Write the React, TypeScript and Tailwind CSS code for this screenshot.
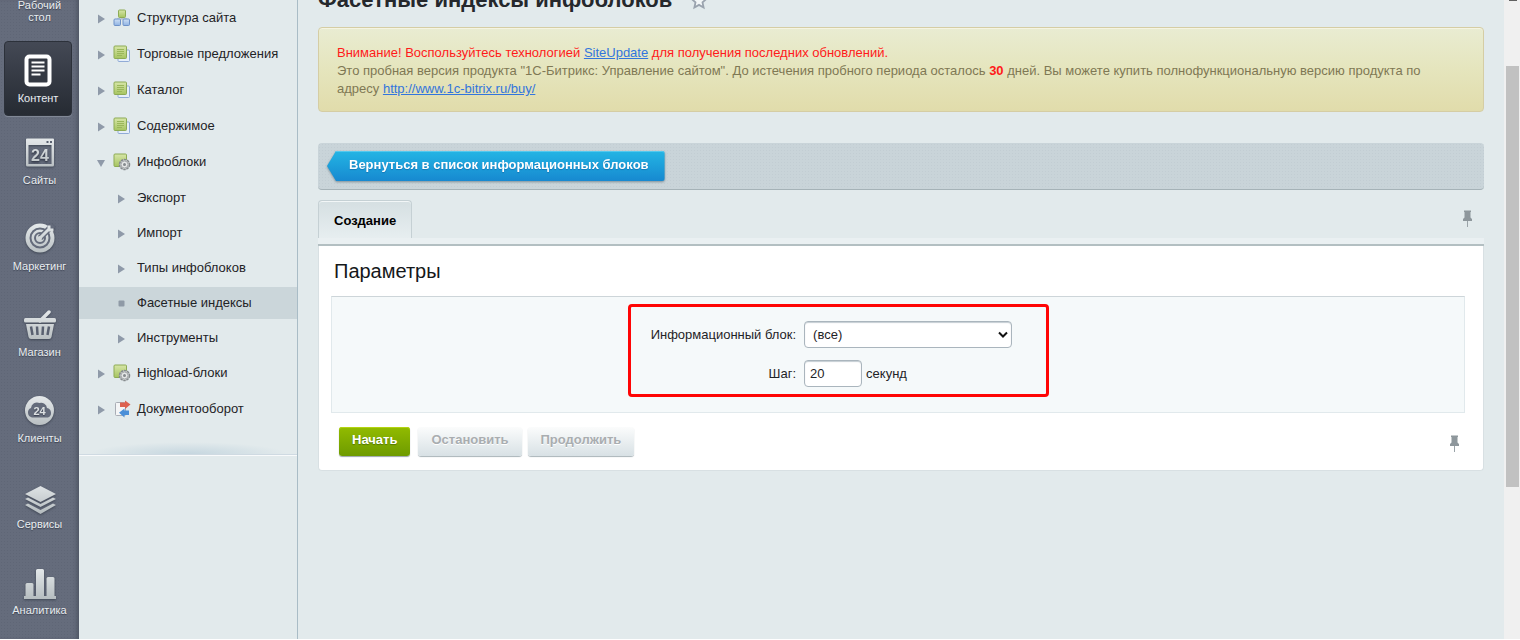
import { useState } from "react";
import type { ReactNode } from "react";

type RailItem = { label: string; icon: ReactNode };
type MenuItem = {
  label: string;
  icon?: "structure" | "pages" | "block" | "workflow";
  sub?: boolean;
  open?: boolean;
};

const MENU: MenuItem[] = [
  { label: "Структура сайта", icon: "structure" },
  { label: "Торговые предложения", icon: "pages" },
  { label: "Каталог", icon: "pages" },
  { label: "Содержимое", icon: "pages" },
  { label: "Инфоблоки", icon: "block", open: true },
  { label: "Экспорт", sub: true },
  { label: "Импорт", sub: true },
  { label: "Типы инфоблоков", sub: true },
  { label: "Фасетные индексы", sub: true },
  { label: "Инструменты", sub: true },
  { label: "Highload-блоки", icon: "block" },
  { label: "Документооборот", icon: "workflow" },
];

const RAIL: RailItem[] = [
  { label: "Сайты", icon: <SitesIcon /> },
  { label: "Маркетинг", icon: <TargetIcon /> },
  { label: "Магазин", icon: <BasketIcon /> },
  { label: "Клиенты", icon: <CloudIcon /> },
  { label: "Сервисы", icon: <LayersIcon /> },
  { label: "Аналитика", icon: <BarsIcon /> },
];

export default function App() {
  return (
    <div className="flex h-screen overflow-hidden border-b border-white bg-[#e2eaec] font-['Liberation_Sans',Arial,sans-serif] text-[13px] text-[#1f2326]">
      <Gradients />
      <Rail />
      <Sidebar />
      <MainArea />
      {/* Scrollbar */}
      <div className="w-4 shrink-0 bg-[#f0f0f0] pl-0.5 pr-px">
        <div className="mx-auto h-px w-2 bg-[#606060]" />
        <div className="mt-[65px] h-[421px] bg-[#c1c1c1]" />
      </div>
    </div>
  );
}

function Rail() {
  return (
    <nav className="flex w-[79px] shrink-0 flex-col bg-[#656c7c] bg-[radial-gradient(#5f6676_1px,transparent_1px)] bg-[size:3px_3px] text-[11px] text-[#e9edf0] shadow-[inset_-4px_0_4px_-2px_#4e5563] [text-shadow:0_1px_1px_#3b4150]">
      <a href="#desktop" className="-mt-px h-[42px] shrink-0 px-3 text-center leading-3">
        Рабочий стол
      </a>
      <a
        href="#content"
        className="ml-1 mr-[7px] flex h-[75px] shrink-0 flex-col items-center rounded-sm border border-[#2c313a] bg-linear-to-b from-[#444955] to-[#262b33] pt-2.5 shadow-[0_1px_0_#818896]"
      >
        <ContentIcon />
        <span className="leading-4">Контент</span>
      </a>
      <div className="pt-[21px]">
        {RAIL.map((item) => (
          <a key={item.label} href="#section" className="flex h-[86px] flex-col items-center">
            {item.icon}
            <span className="mt-px leading-4">{item.label}</span>
          </a>
        ))}
      </div>
    </nav>
  );
}

function Sidebar() {
  const [active, setActive] = useState("Фасетные индексы");

  return (
    <aside className="w-[219px] shrink-0 border-r border-[#a9bcc6]">
      <div className="h-[455px] border-b border-[#cfdae2] bg-[radial-gradient(ellipse_at_bottom,#c5d6df_0%,transparent_70%)] bg-[size:200px_12px] bg-[position:center_bottom] bg-no-repeat shadow-[0_1px_0_#f8fafb]">
        <ul>
          {MENU.map((item) => (
            <li key={item.label} className={item.sub ? "flex h-[35px] items-center" : "flex h-9 items-center"}>
              <a
                href="#menu"
                onClick={() => setActive(item.label)}
                className={`flex h-8 w-full items-center ${active === item.label ? "bg-[#cbd6da]" : ""}`}
              >
                <span className={item.sub ? "w-[58px] pl-[38px]" : "w-[34px] pl-[18px]"}>
                  <Marker open={item.open} dot={active === item.label} />
                </span>
                {item.icon && (
                  <span className="w-6">
                    <MenuIcon kind={item.icon} />
                  </span>
                )}
                {item.label}
              </a>
            </li>
          ))}
        </ul>
      </div>
    </aside>
  );
}

function MainArea() {
  return (
    <main className="min-w-0 flex-1 px-5">
      <div className="-mt-3 flex h-[39px] items-start gap-[18px]">
        <h1 className="text-[22px] font-bold leading-6 text-[#25282c]">Фасетные индексы инфоблоков</h1>
        <button type="button" aria-label="В избранное" className="pt-1">
          <svg width="18" height="18" viewBox="0 0 18 18">
            <path
              d="M9 1.5l2.2 4.8 5.2.6-3.9 3.5 1.1 5.1L9 12.9l-4.6 2.6 1.1-5.1L1.600 6.900l5.200-.6z"
              fill="#f2f6f7"
              stroke="#9aa3ae"
              strokeWidth="1.8"
            />
          </svg>
        </button>
      </div>

      {/* Trial notice */}
      <div className="h-[85px] rounded border border-[#d5cda4] bg-linear-to-b from-[#e9ecd2] via-[#e5e5bd] to-[#e1dcab] px-[18px] pt-4 leading-[18px] text-[#7f7854] shadow-[inset_0_1px_0_#f5f4e3]">
        <p className="text-[#ff1a1a]">
          Внимание! Воспользуйтесь технологией{" "}
          <a href="#siteupdate" className="text-[#3275dd] underline">
            SiteUpdate
          </a>{" "}
          для получения последних обновлений.
        </p>
        <p className="pr-10">
          Это пробная версия продукта "1С-Битрикс: Управление сайтом". До истечения пробного периода осталось{" "}
          <b className="text-[#ff1a1a]">30</b> дней. Вы можете купить полнофункциональную версию продукта по адресу{" "}
          <a href="#buy" className="text-[#3275dd] underline">
            http://www.1c-bitrix.ru/buy/
          </a>
        </p>
      </div>

      {/* Toolbar */}
      <div className="mt-[31px] flex h-[47px] rounded-sm border-b border-[#a5b2b7] bg-[#c9d4d9] bg-[radial-gradient(#c2cdd3_1px,transparent_1px)] bg-[size:3px_3px] px-[9px] pt-2">
        <div className="h-[30px] drop-shadow-[0_1px_1px_#7b8d97]">
          <a
            href="#list"
            className="block h-[30px] rounded-[3px] bg-linear-to-b from-[#25b5e4] to-[#1789d0] pl-[22px] pr-4 font-bold leading-7 text-white shadow-[inset_0_1px_0_#55c9ee] [clip-path:polygon(9px_0,100%_0,100%_100%,9px_100%,0_50%)] [text-shadow:0_1px_1px_#1577b5]"
          >
            Вернуться в список информационных блоков
          </a>
        </div>
      </div>

      {/* Tabs */}
      <div className="mt-2.5 flex h-[38px] items-start justify-between">
        <button
          type="button"
          className="h-[38px] rounded-t-sm border border-b-0 border-[#c5d0d4] bg-linear-to-b from-[#d5dfe2] to-[#e7eef0] px-[15px] pt-0.5 font-bold text-black shadow-[inset_0_1px_0_#f2f6f7]"
        >
          Создание
        </button>
        <PinButton className="mr-2.5 mt-2.5" />
      </div>
      <div className="h-2 border-b-2 border-[#b3bfc2] bg-[#eaf0f2]" />

      <section className="rounded-b-sm border border-t-0 border-[#d8e0e3] bg-white px-3 pb-3.5">
        <h2 className="h-[50px] pl-[3px] text-xl leading-[50px] text-[#15181a]">Параметры</h2>
        <form onSubmit={(e) => e.preventDefault()}>
          <div className="mr-1.5 grid h-[117px] grid-cols-[41%_1fr] content-start items-center gap-x-2 gap-y-3 border border-[#e1e9ec] border-t-[#cdd5d9] bg-[#f5f9fa] pt-6">
            <label htmlFor="iblock" className="text-right">
              Информационный блок:
            </label>
            <div className="relative w-52">
              <select
                id="iblock"
                className="block h-[27px] w-full appearance-none rounded border border-[#aab5bd] bg-white px-2 shadow-[inset_0_1px_1px_#c5ced3]"
              >
                <option>(все)</option>
              </select>
              <svg className="pointer-events-none absolute right-1 top-2.5" width="10" height="8" viewBox="0 0 10 8">
                <path d="M1 1.500l4 4 4-4" fill="none" stroke="#111" strokeWidth="2" />
              </svg>
              <div className="pointer-events-none absolute -left-44 -top-[17px] h-[93px] w-[421px] rounded-sm border-[3px] border-[#ff0505]" />
            </div>
            <label htmlFor="step" className="text-right">
              Шаг:
            </label>
            <div className="flex items-center gap-1">
              <input
                id="step"
                type="text"
                defaultValue="20"
                className="h-[27px] w-[58px] rounded border border-[#aab5bd] bg-white px-[5px] shadow-[inset_0_1px_1px_#c5ced3]"
              />
              <span>секунд</span>
            </div>
          </div>

          <div className="mt-3.5 flex items-start pl-2">
            <button
              type="submit"
              className="h-[29px] rounded-[3px] bg-linear-to-b from-[#92bb00] to-[#6e9b00] px-[13px] pb-1 font-bold text-white shadow-[inset_0_1px_0_#b4d411,0_1px_1px_#9aa5a9] [text-shadow:0_1px_1px_#557700]"
            >
              Начать
            </button>
            <GreyButton className="ml-2">Остановить</GreyButton>
            <GreyButton className="ml-1.5">Продолжить</GreyButton>
            <PinButton className="ml-auto mr-2.5 mt-2" />
          </div>
        </form>
      </section>
    </main>
  );
}

function GreyButton({ children, className }: { children: ReactNode; className: string }) {
  return (
    <button
      type="button"
      disabled
      className={`h-[29px] rounded-[3px] bg-linear-to-b from-[#fbfcfc] to-[#d8e1e5] px-[13px] pb-1 font-bold text-[#a9adb0] shadow-[0_1px_1px_#a9b4b9] [text-shadow:0_1px_0_#fff] ${className}`}
    >
      {children}
    </button>
  );
}

function PinButton({ className }: { className: string }) {
  return (
    <button type="button" aria-label="Закрепить" className={className}>
      <svg width="13" height="17" viewBox="0 0 13 17">
        <path d="M3 .5h7V2H9.500v5.500L11 9v2H2V9l1.500-1.500V2H3z" fill="#8e979c" />
        <path d="M6 11h1v6H6z" fill="#9aa3a8" />
      </svg>
    </button>
  );
}

function Marker({ open, dot }: { open?: boolean; dot?: boolean }) {
  return (
    <svg width="8" height="10" viewBox="0 0 8 10" className="mt-0.5 overflow-visible">
      {dot ? (
        <rect x="1.500" y="1.500" width="6" height="6" rx="1" fill="#8f9aa6" />
      ) : open ? (
        <path d="M0 2h8L4 9z" fill="#8f9aa9" />
      ) : (
        <path d="M1 0.500v9L8 5z" fill="#8f9aa9" />
      )}
    </svg>
  );
}

function MenuIcon({ kind }: { kind: NonNullable<MenuItem["icon"]> }) {
  if (kind === "structure") {
    return (
      <svg width="18" height="18" viewBox="0 0 18 18">
        <path d="M9 8v2M4 10h10" stroke="#a9b5bd" />
        <rect x="5.500" y="1" width="7" height="7.500" rx="1" fill="url(#green)" stroke="#8dab55" />
        <rect x="1" y="10" width="6.500" height="6.500" rx="1" fill="url(#blue)" stroke="#6f92c8" />
        <rect x="10" y="10" width="6.500" height="6.500" rx="1" fill="url(#blue)" stroke="#6f92c8" />
      </svg>
    );
  }
  if (kind === "workflow") {
    return (
      <svg width="18" height="18" viewBox="0 0 18 18">
        <rect x="2.500" y="2.500" width="10" height="13" rx="1" fill="#f4f5f6" stroke="#a9adb5" />
        <path d="M7 2.500h5V.5l5.500 4-5.500 4.500V7H7z" fill="#dd6150" />
        <path d="M16 10.500h-4.500V8.500L6 12.800l5.500 4.700V15H16z" fill="#4a8fd8" />
      </svg>
    );
  }
  return (
    <svg width="18" height="18" viewBox="0 0 18 18">
      {kind === "pages" && <rect x="5" y="5" width="11.500" height="11.500" rx="1" fill="#e6effa" stroke="#91abd6" />}
      <rect x="1" y="1" width="12.500" height="12.500" rx="1" fill="url(#green)" stroke="#8dab55" />
      {kind === "pages" ? (
        <path d="M4 4.500h7M4 6.500h7M4 8.500h7M4 10.500h5" stroke="#9ab75a" />
      ) : (
        <>
          <circle cx="11.500" cy="11.500" r="5" fill="#ccd0d1" stroke="#858a8d" strokeWidth="1.500" strokeDasharray="2.500 .7" />
          <circle cx="11.500" cy="11.500" r="3.500" fill="#e5e7e7" stroke="#a6aaac" />
          <circle cx="11.500" cy="11.500" r="1.500" fill="#858a8d" />
        </>
      )}
    </svg>
  );
}

/* Shared gradients for the icons */
function Gradients() {
  return (
    <svg width="0" height="0" className="absolute">
      <defs>
        <linearGradient id="silver" x1="0" y1="0" x2="0" y2="34" gradientUnits="userSpaceOnUse">
          <stop offset="0" stopColor="#e6eaec" />
          <stop offset="1" stopColor="#b3babd" />
        </linearGradient>
        <linearGradient id="green" x1="0" y1="0" x2="0" y2="1">
          <stop offset="0" stopColor="#d7e6a8" />
          <stop offset="1" stopColor="#a6c460" />
        </linearGradient>
        <linearGradient id="blue" x1="0" y1="0" x2="0" y2="1">
          <stop offset="0" stopColor="#cfe0f5" />
          <stop offset="1" stopColor="#8fb3e3" />
        </linearGradient>
      </defs>
    </svg>
  );
}

function RailSvg({ children }: { children: ReactNode }) {
  return (
    <svg width="34" height="34" viewBox="0 0 34 34" className="shrink-0 drop-shadow-[0_1px_1px_#3f4654]">
      {children}
    </svg>
  );
}

function ContentIcon() {
  return (
    <svg width="28" height="38" viewBox="0 0 28 38" className="shrink-0">
      <rect x="2.500" y="4.500" width="23" height="28" rx="3" fill="#343943" stroke="#fff" strokeWidth="4" />
      <path d="M7.500 10.500h13M7.500 14.500h13M7.500 18.500h13M7.500 22.500h9" stroke="#fff" strokeWidth="2" />
    </svg>
  );
}

function SitesIcon() {
  return (
    <RailSvg>
      <path
        fillRule="evenodd"
        d="M4 1.500h26q1 0 1 1v25.500q0 1.500-1.500 1.500h-25q-1.500 0-1.500-1.500V2.500q0-1 1-1zM5.500 8v19h23V8z"
        fill="url(#silver)"
      />
      <path d="M23.500 4h2v2h-2zM27 4h2v2h-2z" fill="#596070" />
      <text x="17" y="23.500" textAnchor="middle" fontSize="16" fontWeight="bold" fill="url(#silver)">
        24
      </text>
    </RailSvg>
  );
}

function TargetIcon() {
  return (
    <RailSvg>
      <circle cx="17" cy="15" r="14.500" fill="url(#silver)" />
      <circle cx="17" cy="15" r="9.500" fill="none" stroke="#646b7b" strokeWidth="2" />
      <circle cx="17" cy="15" r="5" fill="none" stroke="#646b7b" strokeWidth="2" />
      <path d="M17 15L30 2" stroke="#646b7b" strokeWidth="6" />
      <path d="M17 15L27 5M26 2.500V7h4.500" stroke="url(#silver)" strokeWidth="3" fill="none" />
      <circle cx="17" cy="15" r="2" fill="#d2d7d9" />
    </RailSvg>
  );
}

function BasketIcon() {
  return (
    <RailSvg>
      <path d="M17 12L26 3" stroke="url(#silver)" strokeWidth="3.500" strokeLinecap="round" />
      <rect x="1" y="9" width="32" height="4.500" rx="1.500" fill="url(#silver)" />
      <path d="M3 15h28l-2.500 13q-.5 2-2.500 2H8q-2 0-2.500-2z" fill="url(#silver)" />
      <path d="M8 17.500l1.500 8.500M14 17.500l.5 8.500M20 17.500l-.5 8.500M26 17.500L24.500 26" stroke="#596070" strokeWidth="2.500" />
    </RailSvg>
  );
}

function CloudIcon() {
  return (
    <RailSvg>
      <circle cx="16.500" cy="15.500" r="14.500" fill="url(#silver)" />
      <path d="M9 22.500a5 5 0 0 1-1-9.500 6 6 0 0 1 8.500-5 6 6 0 0 1 7.500 5 5 5 0 0 1 1 9.500z" fill="#646b7b" />
      <text x="16.500" y="19.500" textAnchor="middle" fontSize="11" fontWeight="bold" fill="#dde1e3">
        24
      </text>
    </RailSvg>
  );
}

function LayersIcon() {
  return (
    <RailSvg>
      <path d="M17.500 5L33 13l-15.500 8L2 13z" fill="url(#silver)" />
      <path d="M2 18l3-1.500 12.500 6.500L30 16.500l3 1.500-15.500 8z" fill="url(#silver)" />
      <path d="M2 24l3-1.500L17.500 29 30 22.500l3 1.500-15.500 9z" fill="url(#silver)" />
    </RailSvg>
  );
}

function BarsIcon() {
  return (
    <RailSvg>
      <path
        d="M1 29h1.500V17.500q0-1.500 1.500-1.500h5q1.500 0 1.500 1.500V29H13V3.500Q13 2 14.500 2h5Q21 2 21 3.500V29h2.500V11.500q0-1.500 1.500-1.500h5q1.500 0 1.500 1.500V29H33v3H1z"
        fill="url(#silver)"
      />
    </RailSvg>
  );
}
